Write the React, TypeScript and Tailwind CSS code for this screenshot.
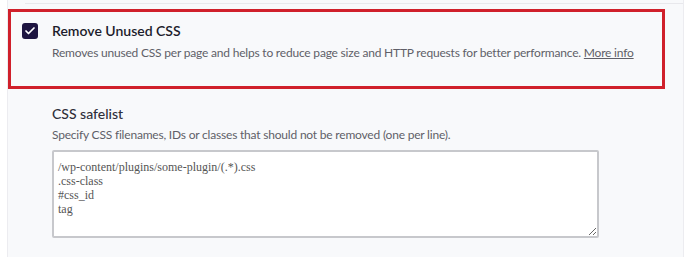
import { Check } from 'lucide-react';

const safelist = `/wp-content/plugins/some-plugin/(.*).css
.css-class
#css_id
tag`;

export default function App() {
  return (
    <div className="w-[690px] h-[257px] bg-white overflow-hidden font-['Lato',sans-serif]">
      <div className="ml-[7px] w-[677px] h-full bg-[#f8f9fb] border-l border-r border-[#ececf0] pt-[3px]">
        <div className="ml-[17px] border-t border-[#e8e8ec]" />
        <div className="mt-[5px] w-[657px] h-[80px] border-[3px] border-[#d0202b] flex gap-[14px] pl-[11px] pt-[10px]">
          <span className="mt-[1px] w-[16px] h-[16px] rounded-[3px] bg-[#1e1541] flex items-center justify-center shrink-0">
            <Check className="w-[12px] h-[12px] text-white" strokeWidth={3.5} />
          </span>
          <div className="flex flex-col">
            <span className="text-[14px] leading-[18px] font-semibold text-[#1d1d2c]">Remove Unused CSS</span>
            <p className="mt-[4px] text-[12px] tracking-[-0.2px] leading-[18px] text-[#5f5f68]">
              Removes unused CSS per page and helps to reduce page size and HTTP requests for better performance.{' '}
              <a className="underline text-[#5f5f68]">More info</a>
            </p>
          </div>
        </div>
        <div className="pl-[44px] pt-[16px]">
          <div className="text-[14px] leading-[18px] font-medium text-[#2f2f3a]">CSS safelist</div>
          <p className="mt-[3px] text-[12px] tracking-[-0.2px] leading-[18px] text-[#5f5f68]">
            Specify CSS filenames, IDs or classes that should not be removed (one per line).
          </p>
          <textarea
            readOnly
            defaultValue={safelist}
            className="mt-[6px] w-[547px] h-[88px] bg-white border-2 border-[#c7c8cc] rounded-[2px] px-[4px] py-[8px] font-['Liberation_Serif',serif] text-[12px] leading-[14px] text-[#555] resize-y outline-none"
          />
        </div>
      </div>
    </div>
  );
}
